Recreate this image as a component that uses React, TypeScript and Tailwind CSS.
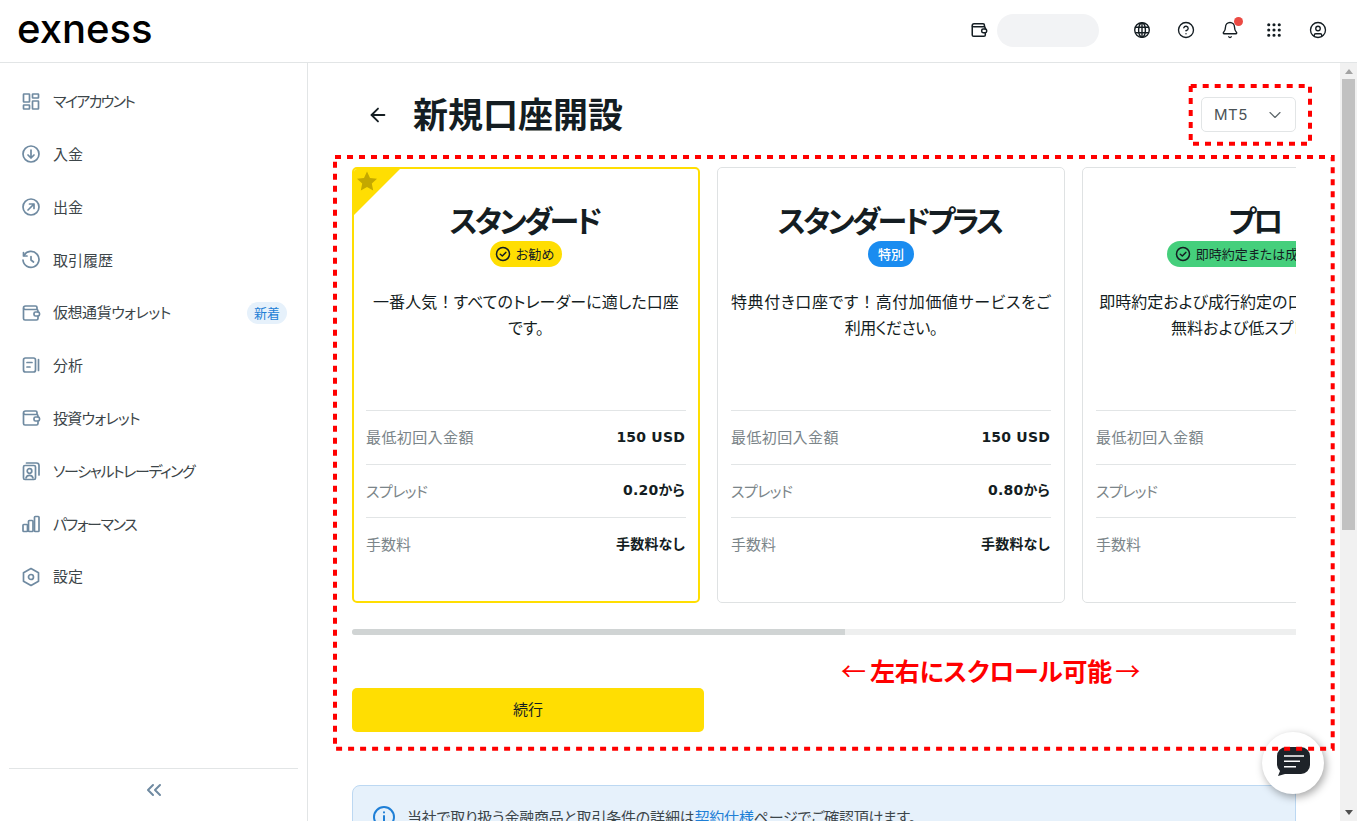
import { Bell, ChevronDown, ChevronsLeft, CircleHelp, CircleUser, Grip, ArrowLeft } from "lucide-react";
import type { ReactNode } from "react";

const FONT = "font-['Noto_Sans_CJK_JP','Noto_Sans',sans-serif]";

function SideIcon({ children }: { children: ReactNode }) {
  return (
    <svg width="20" height="20" viewBox="0 0 20 20" fill="none" stroke="#6f8aa1" strokeWidth="1.7" strokeLinecap="round" strokeLinejoin="round" className="shrink-0">
      {children}
    </svg>
  );
}

function Wallet({ color = "#6f8aa1", size = 20 }: { color?: string; size?: number }) {
  return (
    <svg width={size} height={size} viewBox="0 0 20 20" fill="none" stroke={color} strokeWidth="1.7" strokeLinecap="round" strokeLinejoin="round" className="shrink-0">
      <path d="M16 6V4.5A1.5 1.5 0 0 0 14.5 3H4.5A2 2 0 0 0 2.5 5v10.5A1.5 1.5 0 0 0 4 17h11.5a1.5 1.5 0 0 0 1.5-1.5V13" />
      <path d="M2.7 5.8C3 6.3 3.6 6.5 4.3 6.5h11.2A1.5 1.5 0 0 1 17 8v1" />
      <rect x="13" y="9" width="5.5" height="4" rx="1.5" />
    </svg>
  );
}

const MENU: { label: string; icon: ReactNode; badge?: boolean; spacing?: string }[] = [
  {
    label: "マイアカウント",
    spacing: "tracking-[-1.7px]",
    icon: (
      <SideIcon>
        <rect x="2.5" y="3" width="6" height="8" rx="0.5" />
        <rect x="11.5" y="3" width="6" height="4" rx="0.5" />
        <rect x="2.5" y="14" width="6" height="4" rx="0.5" />
        <rect x="11.5" y="10" width="6" height="8" rx="0.5" />
      </SideIcon>
    ),
  },
  {
    label: "入金",
    icon: (
      <SideIcon>
        <circle cx="10" cy="10" r="8" />
        <path d="M10 6v8M7 11l3 3 3-3" />
      </SideIcon>
    ),
  },
  {
    label: "出金",
    icon: (
      <SideIcon>
        <circle cx="10" cy="10" r="8" />
        <path d="M7 13l6-6M8.5 7H13v4.5" />
      </SideIcon>
    ),
  },
  {
    label: "取引履歴",
    icon: (
      <SideIcon>
        <path d="M3 5.5A8 8 0 1 1 2 10" />
        <path d="M2.5 2.5v3.5H6" />
        <path d="M10 6.5V10l2.5 2" />
      </SideIcon>
    ),
  },
  { label: "仮想通貨ウォレット", icon: <Wallet />, badge: true, spacing: "tracking-[-0.45px]" },
  {
    label: "分析",
    icon: (
      <SideIcon>
        <rect x="2.5" y="3" width="12" height="14" rx="2" />
        <path d="M17.5 4.5v11M6 7.5h5M6 12h3" />
      </SideIcon>
    ),
  },
  { label: "投資ウォレット", icon: <Wallet />, spacing: "tracking-[-0.7px]" },
  {
    label: "ソーシャルトレーディング",
    spacing: "tracking-[-1.4px]",
    icon: (
      <SideIcon>
        <rect x="2.5" y="4.5" width="12" height="14" rx="1.5" />
        <circle cx="8.5" cy="10" r="2.3" />
        <path d="M5 17c.5-2 2-2.7 3.5-2.7s3 .7 3.5 2.7M5.5 2h10A2.5 2.5 0 0 1 18 4.5V14" />
      </SideIcon>
    ),
  },
  {
    label: "パフォーマンス",
    spacing: "tracking-[-1.4px]",
    icon: (
      <SideIcon>
        <rect x="2" y="10.5" width="4.5" height="7" rx="0.8" />
        <rect x="7.5" y="6.5" width="4.5" height="11" rx="0.8" />
        <rect x="13.5" y="2.5" width="4.5" height="15" rx="0.8" />
      </SideIcon>
    ),
  },
  {
    label: "設定",
    icon: (
      <SideIcon>
        <path d="M10 1.5l7.5 4.3v8.4L10 18.5l-7.5-4.3V5.8z" />
        <circle cx="10" cy="10" r="2.5" />
      </SideIcon>
    ),
  },
];

function Bang() {
  return <span className="[font-feature-settings:normal]">！</span>;
}

type Plan = {
  name: string;
  tag: string;
  tagClass: string;
  tagWidth: string;
  lines: [ReactNode, ReactNode];
  spacing: [string, string];
  deposit: string;
  spread: string;
  fee: string;
  selected?: boolean;
};

const PLANS: Plan[] = [
  {
    name: "スタンダード",
    tag: "お勧め",
    tagClass: "bg-[#ffde02] pr-[3px]",
    tagWidth: "w-[72px]",
    lines: [
      <>一番人気<Bang />すべてのトレーダーに適した口座</>,
      "です。",
    ],
    spacing: ["tracking-[0.1px]", ""],
    deposit: "150 USD",
    spread: "0.20から",
    fee: "手数料なし",
    selected: true,
  },
  {
    name: "スタンダードプラス",
    tag: "特別",
    tagClass: "bg-[#1a8cf0] font-medium text-white",
    tagWidth: "w-[46px]",
    lines: [
      <>特典付き口座です<Bang />高付加価値サービスをご</>,
      "利用ください。",
    ],
    spacing: ["tracking-[0.6px]", "tracking-[-0.6px]"],
    deposit: "150 USD",
    spread: "0.80から",
    fee: "手数料なし",
  },
  {
    name: "プロ",
    tag: "即時約定または成行約定",
    tagClass: "bg-[#45cf7c]",
    tagWidth: "w-[178px]",
    lines: [
      <>即時約定および成行約定の口座です<Bang />手数料</>,
      "無料および低スプレッド。",
    ],
    spacing: ["tracking-[0px]", "tracking-[0.1px]"],
    deposit: "200 USD",
    spread: "0.10から",
    fee: "手数料なし",
  },
];

function PlanCard({ plan }: { plan: Plan }) {
  const check = plan.tag !== "特別";
  return (
    <div
      className={`relative flex h-[436px] w-[348px] shrink-0 flex-col items-center overflow-hidden rounded-[5px] ${
        plan.selected ? "border-2 border-[#ffde02]" : "border border-[#dfe2e3]"
      }`}
    >
      {plan.selected && (
        <svg width="48" height="48" viewBox="0 0 48 48" className="absolute left-0 top-0">
          <path d="M0 0H46L0 46Z" fill="#ffde02" />
          <path d="M13 2.5l3 6.5 7 .8-5.2 4.7 1.4 7-6.2-3.5-6.2 3.5 1.4-7L3 9.8l7-.8z" fill="#c4a800" />
        </svg>
      )}
      <h2 className={`flex h-[40px] items-center whitespace-nowrap pr-[3px] text-[30px] font-bold tracking-[-3px] text-[#141d22] ${plan.selected ? "mt-[30px]" : "mt-[31px]"}`}>{plan.name}</h2>
      <div className={`mt-[2px] flex h-[26px] shrink-0 items-center justify-center gap-[5px] rounded-full text-[13px] text-[#141d22] ${plan.tagClass} ${plan.tagWidth}`}>
        {check && (
          <svg width="16" height="16" viewBox="0 0 16 16" fill="none" stroke="#141d22" strokeWidth="1.5" className="shrink-0">
            <circle cx="8" cy="8" r="6.5" />
            <path d="M5.3 8.2l2 1.8 3.5-3.6" strokeLinecap="round" strokeLinejoin="round" />
          </svg>
        )}
        <span className="whitespace-nowrap">{plan.tag}</span>
      </div>
      <div className="mt-[21px] h-[122px] whitespace-nowrap text-center text-[16px] leading-[26px] text-[#141d22]">
        <p className={plan.spacing[0]}>{plan.lines[0]}</p>
        <p className={plan.spacing[1]}>{plan.lines[1]}</p>
      </div>
      <dl className="w-[320px] text-[14px]">
        {[
          ["最低初回入金額", plan.deposit, "tracking-[0.4px]"],
          ["スプレッド", plan.spread, "tracking-[-0.6px]"],
          ["手数料", plan.fee, ""],
        ].map(([label, value, spacing]) => (
          <div key={label} className="flex h-[53.5px] items-center justify-between border-t border-[#e2e5e6] pr-[1px]">
            <dt className={`text-[15px] text-[#7b8589] ${spacing}`}>{label}</dt>
            <dd className="font-['DejaVu_Sans','Noto_Sans_CJK_JP',sans-serif] font-bold tracking-[0.2px] text-[#141d22]">{value}</dd>
          </div>
        ))}
      </dl>
    </div>
  );
}

export default function App() {
  return (
    <div className={`relative flex h-[821px] flex-col overflow-hidden bg-white text-[#141d22] [font-feature-settings:'palt'] ${FONT}`}>
      <header className="flex h-[63px] shrink-0 items-center border-b border-[#e2e5e6] pb-[2px] pl-[17px] pr-[17px]">
        <span className="-mt-[2px] font-['Inter',sans-serif] text-[40px] font-medium leading-none text-black">exness</span>
        <div className="ml-auto flex items-center">
          <Wallet color="#141d22" size={18} />
          <div className="ml-[9px] mr-[21px] h-[33px] w-[102px] rounded-full bg-[#f2f3f5]" />
          <div className="flex h-11 w-11 items-center justify-center">
            <svg width="18" height="18" viewBox="0 0 18 18" fill="none" stroke="#141d22" strokeWidth="1.4">
              <circle cx="9" cy="9" r="7.3" />
              <ellipse cx="9" cy="9" rx="3.4" ry="7.3" />
              <path d="M9 1.7v14.6M2.3 6.3h13.4M2.3 11.7h13.4" />
            </svg>
          </div>
          <div className="flex h-11 w-11 items-center justify-center"><CircleHelp size={18} strokeWidth={1.8} /></div>
          <div className="relative flex h-11 w-11 items-center justify-center">
            <Bell size={18} strokeWidth={1.8} />
            <span className="absolute left-[26px] top-[9px] h-[9px] w-[9px] rounded-full bg-[#eb4a43]" />
          </div>
          <div className="flex h-11 w-11 items-center justify-center"><Grip size={18} strokeWidth={2.2} /></div>
          <div className="flex h-11 w-11 items-center justify-center"><CircleUser size={18} strokeWidth={1.8} /></div>
        </div>
      </header>

      <div className="flex min-h-0 flex-1">
        <aside className="flex w-[308px] shrink-0 flex-col border-r border-[#e2e5e6] px-[9px] pt-[12px]">
          <nav>
            {MENU.map((item) => (
              <div key={item.label} className="flex h-[52.8px] items-center gap-[12px] pl-[12px] pr-[11px] text-[15px] text-[#3c4549]">
                {item.icon}
                <span className={`whitespace-nowrap ${item.spacing ?? ""}`}>{item.label}</span>
                {item.badge && (
                  <span className="ml-auto flex h-[22px] w-[40px] items-center justify-center rounded-full bg-[#e6f1fb] text-[13px] text-[#1f7fd6]">新着</span>
                )}
              </div>
            ))}
          </nav>
          <div className="mt-auto flex h-[53px] items-center justify-center border-t border-[#e2e5e6] pb-[10px]">
            <ChevronsLeft size={24} strokeWidth={2} className="text-[#6f8aa1]" />
          </div>
        </aside>

        <main className="min-w-0 flex-1 overflow-hidden px-[44px] pt-[34px]">
          <div className="flex h-[35px] items-center">
            <ArrowLeft size={22} strokeWidth={2} className="ml-[15px]" />
            <h1 className="mb-[2px] ml-[24px] whitespace-nowrap text-[35px] font-bold">新規口座開設</h1>
            <div className="ml-auto flex h-[35px] w-[95px] items-center justify-between rounded-[5px] border border-[#e2e5e6] pl-[12px] pr-[10px] pt-[1px] font-['Inter',sans-serif] text-[15px] tracking-[0.5px] text-[#4a5256]">
              MT5
              <ChevronDown size={20} strokeWidth={1.4} className="text-[#5d666a]" />
            </div>
          </div>

          <div className="mt-[35px] flex gap-[17px] overflow-hidden">
            {PLANS.map((plan) => (
              <PlanCard key={plan.name} plan={plan} />
            ))}
          </div>

          <div className="mt-[26px] h-[6px] rounded-l-full bg-[#eeefef]">
            <div className="h-full w-[493px] rounded-l-full bg-[#d0d4d4]" />
          </div>

          <button className="mt-[53px] h-[44px] w-[352px] rounded-[5px] bg-[#ffde02] pb-[2px] text-[15px] text-[#141d22]">続行</button>

          <div className="mt-[53px] flex h-[80px] gap-[11px] rounded-t-lg border border-[#bcd8f2] bg-[#e6f1fb] pl-[19px] pt-[19px] text-[15px] tracking-[-0.2px] text-[#3c4549]">
            <svg width="24" height="24" viewBox="0 0 24 24" fill="none" stroke="#1f7fd6" strokeWidth="2" strokeLinecap="round" className="shrink-0">
              <circle cx="12" cy="12" r="10" />
              <path d="M12 11v6M12 7.3v.2" />
            </svg>
            <span className="whitespace-nowrap leading-[24px]">
              当社で取り扱う金融商品と取引条件の詳細は<span className="text-[#1f7fd6]">契約仕様</span>ページでご確認頂けます。
            </span>
          </div>
        </main>

        <div className="flex w-[17px] shrink-0 flex-col items-center bg-[#f1f1f1]">
          <div className="flex h-[16px] items-center justify-center">
            <span className="h-0 w-0 border-x-[4px] border-b-[5px] border-x-transparent border-b-[#a3a3a3]" />
          </div>
          <div className="h-[451px] w-[13px] bg-[#c1c1c1]" />
          <div className="mt-auto flex h-[17px] items-center justify-center">
            <span className="h-0 w-0 border-x-[4px] border-t-[5px] border-x-transparent border-t-[#505050]" />
          </div>
        </div>
      </div>

      <div className="absolute left-[1262px] top-[732px] flex h-[62px] w-[62px] items-center justify-center rounded-full bg-white shadow-[2px_3px_8px_rgba(0,0,0,0.35)]">
        <svg width="34" height="31" viewBox="0 0 34 31" className="mb-[3px]">
          <path d="M10 1h15a9 9 0 0 1 9 9v9a9 9 0 0 1-9 9H9l-7 2 2-5A9 9 0 0 1 1 19v-9a9 9 0 0 1 9-9z" fill="#1e2329" />
          <path d="M8 10h20M8 15.3h16M8 20.7h12" stroke="#fff" strokeWidth="1.6" />
        </svg>
      </div>

      {/* red annotations added on top of the screenshot */}
      <svg width="1357" height="821" className="pointer-events-none absolute left-0 top-0">
        <rect x="335" y="157" width="997.7" height="591.7" fill="none" stroke="#ff0000" strokeWidth="4" strokeDasharray="6 6" />
        <rect x="1190.7" y="86" width="119.3" height="57.7" fill="none" stroke="#ff0000" strokeWidth="4" strokeDasharray="6 6" />
      </svg>
      <div className="absolute left-[841px] top-[652px] flex whitespace-nowrap text-[25px] font-bold leading-[36px] tracking-[-0.2px] text-[#ff0000]">
        <span className="w-[29px] font-normal">←</span>
        <span>左右にスクロール可能</span>
        <span className="ml-[3px] font-normal">→</span>
      </div>
    </div>
  );
}
